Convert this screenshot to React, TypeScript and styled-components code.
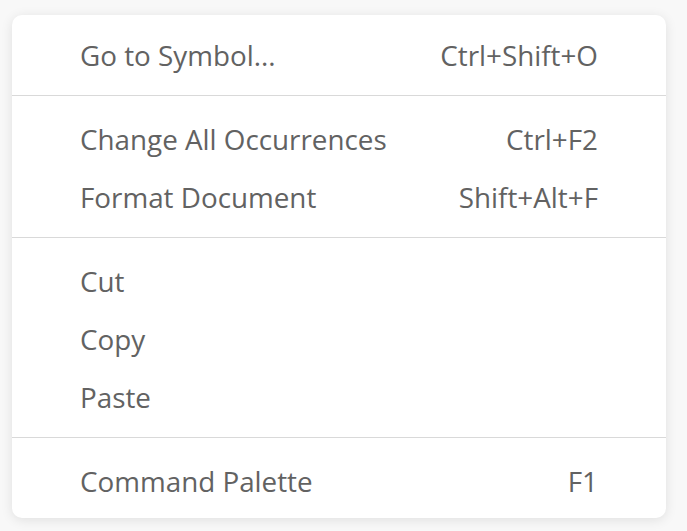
import React from "react";
import styled, { createGlobalStyle } from "styled-components";

const Global = createGlobalStyle`
  html, body { margin: 0; padding: 0; background: #f8f8f8; }
  body { font-family: "Open Sans", "Noto Sans", sans-serif; }
`;

const Page = styled.div`
  width: 687px;
  height: 531px;
  box-sizing: border-box;
  padding: 15px 21px 14px 12px;
`;

const Menu = styled.div`
  background: #ffffff;
  border-radius: 10px;
  box-shadow: 0 2px 12px rgba(0, 0, 0, 0.1);
  padding: 9px 0 10px;
  display: flex;
  flex-direction: column;
`;

const Item = styled.div`
  display: flex;
  align-items: center;
  justify-content: space-between;
  height: 58px;
  padding: 3px 68px 0;
  box-sizing: border-box;
  font-size: 27.8px;
  font-weight: 380;
  color: #626262;
`;

const Label = styled.span``;
const Shortcut = styled.span``;

const Separator = styled.div`
  height: 1px;
  background: #d9d9d9;
  margin: 13px 0 12px;
`;

type Entry = { label: string; key?: string } | "sep";

const entries: Entry[] = [
  { label: "Go to Symbol...", key: "Ctrl+Shift+O" },
  "sep",
  { label: "Change All Occurrences", key: "Ctrl+F2" },
  { label: "Format Document", key: "Shift+Alt+F" },
  "sep",
  { label: "Cut" },
  { label: "Copy" },
  { label: "Paste" },
  "sep",
  { label: "Command Palette", key: "F1" },
];

export default function App() {
  return (
    <>
      <Global />
      <Page>
        <Menu>
          {entries.map((e, i) =>
            e === "sep" ? (
              <Separator key={i} />
            ) : (
              <Item key={i}>
                <Label>{e.label}</Label>
                {e.key && <Shortcut>{e.key}</Shortcut>}
              </Item>
            )
          )}
        </Menu>
      </Page>
    </>
  );
}
